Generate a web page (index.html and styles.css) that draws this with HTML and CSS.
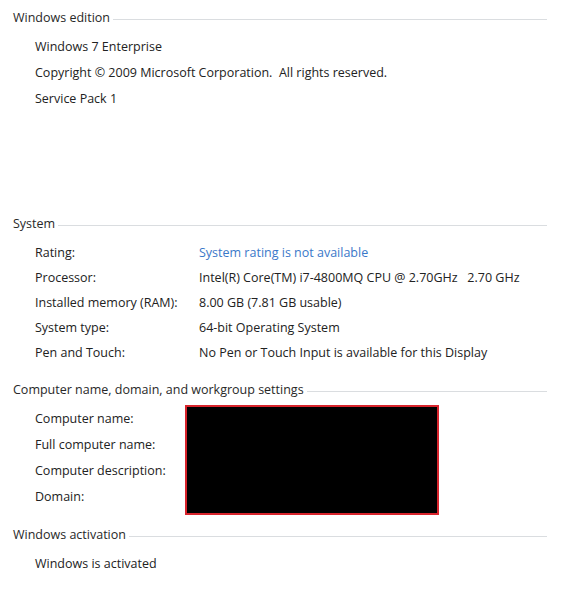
FILE: index.html
```html
<!DOCTYPE html>
<html>
<head>
<meta charset="utf-8">
<link rel="stylesheet" href="styles.css">
</head>
<body>
<div class="page">
  <section class="group edition">
    <div class="group-head"><span class="group-title">Windows edition</span><span class="rule"></span></div>
    <div class="rows">
      <div class="row">Windows 7 Enterprise</div>
      <div class="row">Copyright © 2009 Microsoft Corporation.&nbsp; All rights reserved.</div>
      <div class="row">Service Pack 1</div>
    </div>
  </section>

  <section class="group system">
    <div class="group-head"><span class="group-title">System</span><span class="rule"></span></div>
    <div class="pairs">
      <div class="label">Rating:</div><div class="value link">System rating is not available</div>
      <div class="label">Processor:</div><div class="value">Intel(R) Core(TM) i7-4800MQ CPU @ 2.70GHz&nbsp;&nbsp; 2.70 GHz</div>
      <div class="label">Installed memory (RAM):</div><div class="value">8.00 GB (7.81 GB usable)</div>
      <div class="label">System type:</div><div class="value">64-bit Operating System</div>
      <div class="label">Pen and Touch:</div><div class="value">No Pen or Touch Input is available for this Display</div>
    </div>
  </section>

  <section class="group computer">
    <div class="group-head"><span class="group-title">Computer name, domain, and workgroup settings</span><span class="rule"></span></div>
    <div class="names">
      <div class="label">Computer name:</div>
      <div class="redact"></div>
      <div class="label">Full computer name:</div>
      <div class="label">Computer description:</div>
      <div class="label">Domain:</div>
    </div>
  </section>

  <section class="group activation">
    <div class="group-head"><span class="group-title">Windows activation</span><span class="rule"></span></div>
    <div class="rows">
      <div class="row">Windows is activated</div>
    </div>
  </section>
</div>
</body>
</html>
```

FILE: styles.css
```css
html, body {
  margin: 0;
  padding: 0;
  background: #ffffff;
}

body {
  font-family: "Open Sans", "Noto Sans", "Liberation Sans", sans-serif;
  font-size: 12.5px;
  color: #222222;
}

.page {
  width: 534px;
  padding: 8px 0 0 13px;
  display: flex;
  flex-direction: column;
}

.group-head {
  display: flex;
  align-items: center;
  height: 20px;
  line-height: 20px;
}

.group-title {
  white-space: nowrap;
  color: #282828;
}

.rule {
  flex: 1;
  height: 1px;
  margin: 3px 0 0 3px;
  background: #dadde0;
}

.rows {
  display: flex;
  flex-direction: column;
  padding: 6px 0 0 22px;
}

.row {
  height: 26px;
  line-height: 26px;
  white-space: nowrap;
}

.edition {
  margin-bottom: 102px;
}

.pairs {
  display: grid;
  grid-template-columns: 164px 1fr;
  grid-auto-rows: 25px;
  line-height: 25px;
  padding: 6px 0 0 22px;
  white-space: nowrap;
}

.link {
  color: #3a78c9;
}

.system {
  margin-bottom: 15px;
}

.names {
  display: grid;
  grid-template-columns: 150px 254px;
  grid-auto-rows: 26px;
  line-height: 26px;
  padding: 6px 0 0 22px;
  white-space: nowrap;
}

.names .label {
  grid-column: 1;
}

.redact {
  grid-column: 2;
  grid-row: 1 / span 4;
  margin: -1px 0 -5px;
  background: #000000;
  border: 2px solid #d8242c;
  box-sizing: border-box;
}

.computer {
  margin-bottom: 15px;
}
```
